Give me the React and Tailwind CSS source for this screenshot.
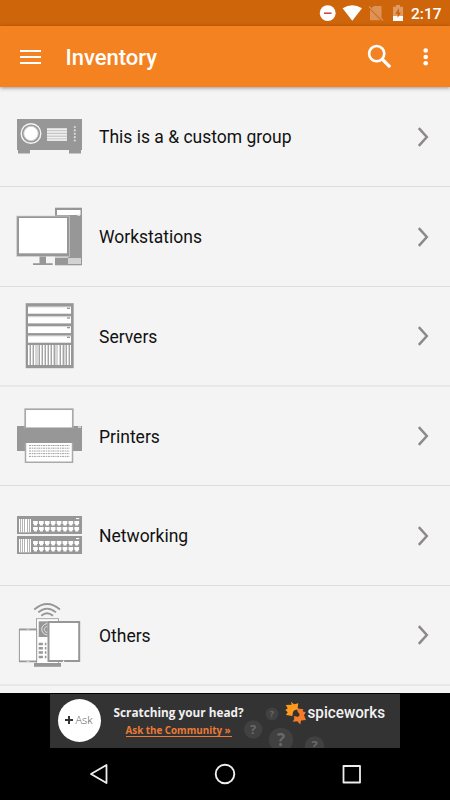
const GRAY = '#979797';

// Group artwork, all drawn on the same 68x71 box

function ProjectorIcon() {
  return (
    <>
      <path d="M1 18h65v31h-1v3.5H53V49H14v3.5H2V49H1z" fill={GRAY} />
      <circle cx="15" cy="32.5" r="9.8" fill={GRAY} stroke="#f4f4f4" strokeWidth="1.4" />
      <circle cx="15" cy="32.5" r="7.2" fill="#fff" stroke="#cfcfcf" strokeWidth="1" />
      <rect x="31" y="27" width="20" height="12.8" fill="#c4c4c4" />
      {[27.5, 30.2, 33, 35.8, 38.3].map((y) => (
        <rect key={y} x="31" y={y} width="20" height="1.6" fill="#efefef" />
      ))}
      {[26, 29.4, 32.8, 36.2, 39.6].map((y) => (
        <circle key={y} cx="58.8" cy={y} r="1.1" fill="#dcdcdc" />
      ))}
    </>
  );
}

function WorkstationIcon() {
  return (
    <>
      <rect x="39" y="6.7" width="27" height="57.6" fill={GRAY} />
      <rect x="41" y="9" width="23.5" height="5" fill="#fff" />
      <rect x="61.5" y="13.5" width="2.5" height="1.5" fill="#ddd" />
      <rect x="52" y="57" width="13" height="6" fill="#d2d2d2" />
      <path d="M39 56.5h13" stroke="#d2d2d2" />
      <rect x="0.7" y="15" width="52.6" height="40.4" fill={GRAY} stroke="#d2d2d2" strokeWidth=".7" />
      <rect x="3" y="17" width="48" height="35.3" fill="#fff" />
      <path d="M23.5 55.5H30v6.7h6.7V64H17v-1.8h6.5z" fill={GRAY} />
    </>
  );
}

function ServerIcon() {
  return (
    <>
      <rect x="9.7" y="2.2" width="48" height="65" fill={GRAY} />
      {[5.7, 15.4, 25.1, 34.7].map((y) => (
        <g key={y}>
          <rect x="12" y={y} width="43" height="7" fill="#fff" />
          <path d={`M12 ${y + 0.4}h43`} stroke="#d8d8d8" strokeWidth=".8" />
          <rect x="51" y={y + 1} width="3" height="1.2" fill="#8a8a8a" />
        </g>
      ))}
      <rect x="12" y="44" width="43" height="20" fill="#d6d6d6" />
      {[12, 15, 18, 24, 27, 30, 33, 36, 42, 45, 51, 54].map((x) => (
        <rect key={x} x={x} y="44" width="1" height="20" fill="#fff" />
      ))}
      {[14, 17, 23, 26, 29, 32, 35, 38, 44, 47, 50, 53].map((x) => (
        <rect key={x} x={x} y="44" width="1" height="20" fill="#a4a4a4" />
      ))}
    </>
  );
}

function PrinterIcon() {
  return (
    <>
      <rect x="1" y="25" width="65" height="25" fill={GRAY} />
      <rect x="9.2" y="8.2" width="47.6" height="19" fill="#fff" stroke="#a9a9a9" strokeWidth="1.7" />
      <rect x="9" y="27" width="48" height="3" fill={GRAY} />
      <rect x="62" y="25.4" width="3" height="1.4" fill="#e5e5e5" />
      <rect x="10" y="42" width="46.3" height="19.2" fill="#fff" />
      <path d="M9.5 42v19.3h47V42" fill="none" stroke="#a9a9a9" strokeWidth="1.5" />
      <path
        d="M13 44.5h40.7M13 47.2h40.7M13 50h40.7M13 52.6h40.7M13 55.4h40.7"
        stroke="#929292"
        strokeWidth=".9"
        strokeDasharray="2 .8 1.2 .7"
      />
    </>
  );
}

function NetworkIcon() {
  return (
    <>
      {[16, 36].map((top) => (
        <g key={top}>
          <rect x="1" y={top} width="65" height="18" fill={GRAY} />
          <rect x="3" y={top + 3} width="12" height="13.3" fill="#fff" />
          {[4, 6, 8, 11, 13].map((x) => (
            <rect key={x} x={x} y={top + 3} width=".9" height="13.3" fill="#ababab" />
          ))}
          {[5, 11].map((row) =>
            [0, 1, 2, 3, 4, 5, 6, 7].map((col) => (
              <path
                key={`${row}-${col}`}
                d={`M${17.1 + col * 5.9} ${top + row}h4.7v3h-.8v1.5h-3.1v-1.5h-.8z`}
                fill="#fff"
              />
            ))
          )}
          <rect x="60" y={top + 2} width="3.2" height="1.1" fill="#fff" />
        </g>
      ))}
    </>
  );
}

function OthersIcon() {
  return (
    <>
      <g fill="none" stroke={GRAY} strokeWidth="1.8">
        <path d="M18.3 9.5Q31 -1.5 44 9.5" />
        <path d="M22.3 12.4Q31 4.8 40 12.4" />
        <path d="M25.3 15.7Q31 10.7 37 15.7" />
      </g>
      <rect x="20.5" y="18.7" width="22" height="45" fill="#fff" stroke="#a4a4a4" />
      <rect x="18" y="63" width="27" height="3.8" fill={GRAY} />
      <rect x="22.7" y="21.3" width="9" height="15.7" fill={GRAY} />
      <path d="M31 23.5c-7 1.5-7 10 0 11.5M31 26.5c-3.5 1-3.5 5 0 6" fill="none" stroke="#e8e8e8" />
      {[42.7, 47, 51.3, 55.7].map((y) => (
        <path key={y} d={`M22.7 ${y}h4.2v2.5h-4.2zM28.8 ${y}h1.6v2.5h-1.6z`} fill={GRAY} />
      ))}
      <rect x="3.4" y="29.7" width="17.3" height="31.8" fill="#fff" stroke={GRAY} />
      <path d="M3 29.4h18M3 61.4h18" stroke={GRAY} strokeWidth="1.8" />
      <path d="M10.5 29.2h3M10.5 61.5h3" stroke="#ddd" strokeWidth=".8" />
      <rect x="32.5" y="22" width="30.7" height="39" fill="#fff" stroke={GRAY} strokeWidth="2" />
      <circle cx="47.5" cy="61.2" r=".8" fill="#fff" />
    </>
  );
}

const GROUPS = [
  { name: 'This is a & custom group', Icon: ProjectorIcon, row: 'h-[100px] border-b border-[#dedede]' },
  { name: 'Workstations', Icon: WorkstationIcon, row: 'h-[100px] border-b border-[#dedede]' },
  { name: 'Servers', Icon: ServerIcon, row: 'h-[100px] border-b-2 border-[#e8e8e8]' },
  { name: 'Printers', Icon: PrinterIcon, row: 'h-[99px] border-b border-[#dedede]' },
  { name: 'Networking', Icon: NetworkIcon, row: 'h-[100px] border-b border-[#dedede]' },
  { name: 'Others', Icon: OthersIcon, row: 'h-[100px] border-b-2 border-[#e8e8e8]' },
];

function StatusBar() {
  return (
    <div className="flex h-[26px] items-center bg-[#cf650a] pl-[319px] text-white">
      <svg className="h-[26px] w-[88px]" viewBox="319 0 88 26">
        <circle cx="327.7" cy="13.2" r="7.9" fill="#fff" />
        <path d="M324 13.2h7.5" stroke="#c0443a" strokeWidth="1.5" />
        <path d="M342.6 8.3Q352.3 2 362 8.3L352.3 20.8z" fill="#fff" />
        <g fill="#dd9358">
          <path d="M374 6h7.5v12.5l-10-10.6z" />
          <path d="M370 9.5v10.7h10.5z" />
        </g>
        <path d="M369 6.5l14 14" stroke="#dd9358" strokeWidth="1.3" />
        <path d="M393 6.8h3V5h4v1.8h3V16h-10z" fill="#dd9b66" />
        <path d="M393 16h10v5h-10z" fill="#fff" />
        <path d="M399 8l-3.7 6h2.3v4l3.4-5.6h-2z" fill="#cf650a" />
      </svg>
      <span className="ml-[4px] pt-[3px] text-[15.5px] font-medium leading-none">2:17</span>
    </div>
  );
}

function AppBar() {
  return (
    <header className="relative flex h-[61px] items-center bg-[#f58220] pl-5 text-white shadow-[0_1px_4px_rgba(0,0,0,0.4)]">
      <svg className="h-4 w-[21px]" viewBox="0 0 21 16" stroke="#fff" strokeWidth="2">
        <path d="M0 2h21M0 8h21M0 14h21" />
      </svg>
      <h1 className="ml-[24.5px] flex-1 pt-[3px] text-[22px] font-medium leading-none">Inventory</h1>
      <svg className="h-7 w-7" viewBox="366 43 28 28" fill="none" stroke="#fff">
        <circle cx="376.7" cy="53.6" r="7.6" strokeWidth="2.6" />
        <path d="M382 59l8.2 8.2" strokeWidth="3.2" />
      </svg>
      <svg className="mr-[18px] ml-[26px] h-6 w-3" viewBox="0 0 12 24" fill="#fff">
        <circle cx="5.7" cy="5.5" r="2.3" />
        <circle cx="5.7" cy="12" r="2.3" />
        <circle cx="5.7" cy="18.3" r="2.3" />
      </svg>
    </header>
  );
}

function GroupRow({ name, Icon, row }) {
  return (
    <li className={`flex items-center pl-4 ${row}`}>
      <svg className="mt-3.5 h-[71px] w-[68px] self-start" viewBox="0 0 68 71">
        <Icon />
      </svg>
      <span className="ml-[15px] flex-1 pt-[3px] text-[17.5px] leading-none text-[#111]">{name}</span>
      <svg className="mr-5 h-[22px] w-[14px]" viewBox="0 0 14 22" fill="none" stroke="#8d8989" strokeWidth="2.5">
        <path d="M2.8 2.2l8 8.8-8 8.8" />
      </svg>
    </li>
  );
}

function AdBanner() {
  return (
    <div className="relative mx-auto mt-px flex h-[54px] w-[350px] overflow-hidden bg-[#333]">
      {/* faded question marks behind the copy */}
      <svg className="absolute inset-0 h-[54px] w-[350px] font-['Open_Sans',sans-serif] font-bold" viewBox="50 694 350 54">
        <g fill="#414141">
          <circle cx="272" cy="714" r="6.4" />
          <circle cx="253.2" cy="729.5" r="9.2" />
          <circle cx="281" cy="740" r="12.2" />
          <circle cx="314.5" cy="746" r="9.7" />
        </g>
        <g fill="#696969" textAnchor="middle">
          <text x="272" y="717.3" fontSize="9">?</text>
          <text x="253.2" y="734" fontSize="13">?</text>
          <text x="281" y="745.5" fontSize="17">?</text>
          <text x="314.5" y="749.5" fontSize="13">?</text>
        </g>
      </svg>
      <div className="relative mt-[4.5px] ml-[7.5px] flex h-[43px] w-[43px] items-center justify-center rounded-full bg-white font-['Open_Sans',sans-serif] text-[11px] text-[#555]">
        <svg className="mr-[2px] h-2 w-2" viewBox="0 0 8 8" stroke="#333" strokeWidth="2">
          <path d="M4 0v8M0 4h8" />
        </svg>
        <span className="font-light">Ask</span>
      </div>
      <div className="relative ml-[13px] w-[132px] pt-[11px] font-['Open_Sans',sans-serif] font-bold">
        <p className="whitespace-nowrap text-[11.8px] leading-[14px] text-[#f0f0f0]">Scratching your head?</p>
        <p className="mt-[6px] ml-[12px] w-[106px] whitespace-nowrap border-b border-[#ec7a35] text-[9.8px] leading-[11px] text-[#ec7a35]">
          Ask the Community »
        </p>
      </div>
      <svg className="relative ml-[38px] h-[36px] w-[106px] self-start" viewBox="284 694 106 36">
        <path
          d="M285.7 705l6-.3-.7-3 3 2.6 4.3-1-.6 4.4 1.3 1.6-4 .7c-1.6.8-2.3 2-2.2 3.4l-.5 2.6-6.3-1 1.7-2.7-2.3-2.3 2.3-1.7z"
          fill="#ff9a1f"
        />
        <path
          d="M293.7 716l3.7.7c1.8-.3 2.4-1.4 2-2.8l-1.9-2.5-.2-2.7 6 .3-.6 2.3 3 1-1.7 3 2 4.7-5 .6-.7 4-3-3.3-4.6.4 1.6-2.7z"
          fill="#f57a29"
        />
        <text
          x="307.5"
          y="717.5"
          textLength="77.5"
          lengthAdjust="spacingAndGlyphs"
          fontSize="16"
          fill="#f2f2f2"
          className="font-['Roboto',sans-serif] font-medium"
        >
          spiceworks
        </text>
      </svg>
    </div>
  );
}

function NavBar() {
  return (
    <nav className="flex flex-1 items-center justify-between pr-[87px] pl-[88px]">
      <svg className="h-6 w-6" viewBox="0 0 24 24" fill="none" stroke="#eee" strokeWidth="1.8" strokeLinejoin="round">
        <path d="M18.5 3v18L3 12z" />
      </svg>
      <svg className="h-6 w-6" viewBox="0 0 24 24" fill="none" stroke="#eee" strokeWidth="1.9">
        <circle cx="11" cy="12" r="9.3" />
      </svg>
      <svg className="h-6 w-6" viewBox="0 0 24 24" fill="none" stroke="#eee" strokeWidth="1.8" strokeLinejoin="round">
        <rect x="4.5" y="4" width="16.5" height="16.5" />
      </svg>
    </nav>
  );
}

export default function App() {
  return (
    <div className="flex h-[800px] w-[450px] flex-col overflow-hidden bg-black font-['Roboto',sans-serif]">
      <StatusBar />
      <AppBar />
      <ul className="h-[606px] bg-[#f4f4f4]">
        {GROUPS.map((group) => (
          <GroupRow key={group.name} {...group} />
        ))}
      </ul>
      <AdBanner />
      <NavBar />
    </div>
  );
}
